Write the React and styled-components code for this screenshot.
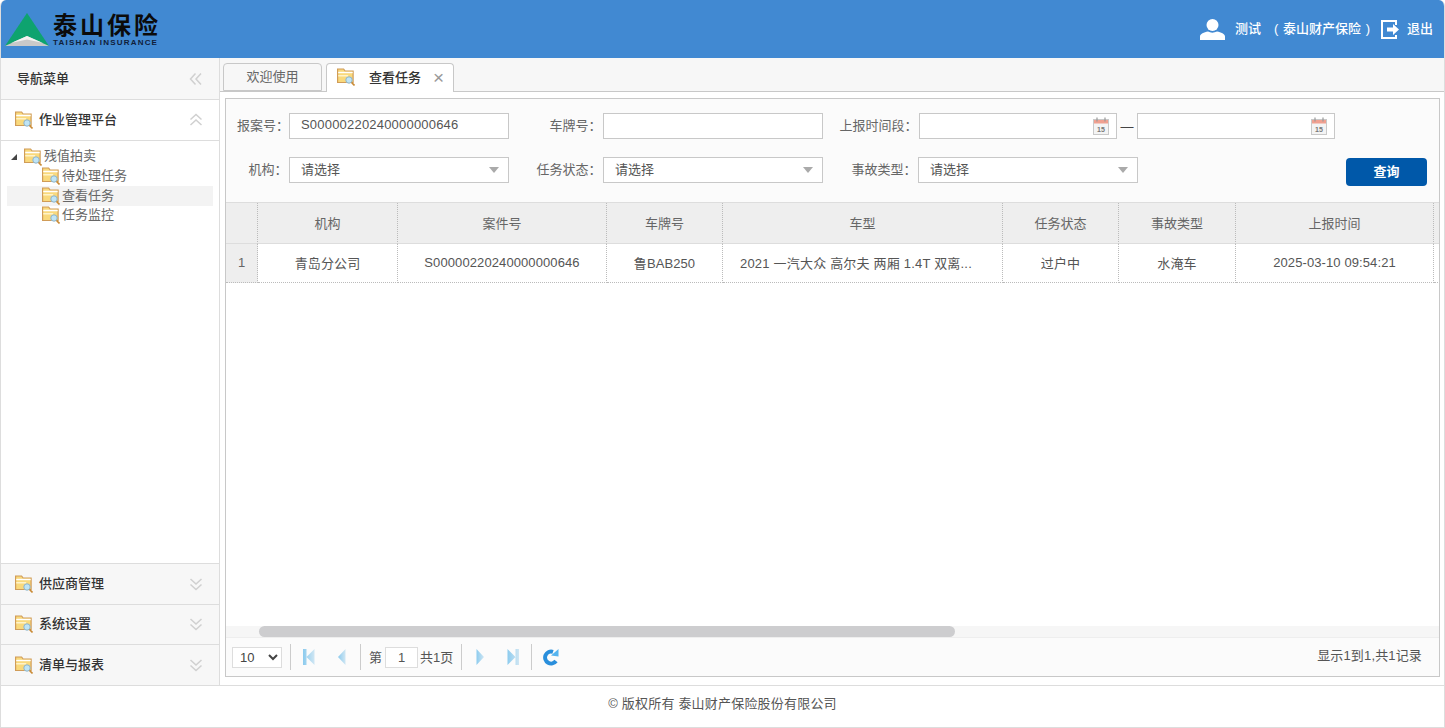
import styled, { createGlobalStyle } from "styled-components";

const GlobalStyle = createGlobalStyle`
  html, body {
    margin: 0;
    padding: 0;
    background: #fff;
  }
  body {
    font-family: "Liberation Sans", "Noto Sans CJK SC", sans-serif;
    font-size: 13px;
    color: #555;
  }
  * {
    box-sizing: border-box;
  }
`;

const columns = [
  { title: "", width: 32 },
  { title: "机构", width: 140 },
  { title: "案件号", width: 209 },
  { title: "车牌号", width: 116 },
  { title: "车型", width: 280 },
  { title: "任务状态", width: 116 },
  { title: "事故类型", width: 117 },
  { title: "上报时间", width: 198 },
  { title: "", width: 6 },
];

const rows = [
  [
    "青岛分公司",
    "S00000220240000000646",
    "鲁BAB250",
    "2021 一汽大众 高尔夫 两厢 1.4T 双离...",
    "过户中",
    "水淹车",
    "2025-03-10 09:54:21",
    "",
  ],
];

const FolderIcon = () => (
  <FolderSvg viewBox="0 0 18 18" width="18" height="18">
    <path d="M0.600 1h6l1.500 2h8v11.500h-15.500z" fill="#f9d97c" stroke="#d09c58" strokeWidth="1.200" />
    <path d="M1.200 4.500h14.500" stroke="#fff" strokeWidth="1.400" />
    <path d="M1.200 7h10v1.500h-10z" fill="#fff3c8" />
    <circle cx="12" cy="12" r="3.200" fill="#bfe4f5" stroke="#8fb4c8" />
    <path d="M14.500 14.500l3 3" stroke="#c98a35" strokeWidth="1.600" />
  </FolderSvg>
);

const DoubleChevron = ({ dir }) => (
  <ChevronSvg viewBox="0 0 14 14" width="14" height="14" $dir={dir}>
    <path d="M1.500 6.500L7 1.500l5.500 5M1.500 12L7 7l5.500 5" fill="none" stroke="#d0d0d0" strokeWidth="1.500" />
  </ChevronSvg>
);

const CalendarIcon = () => (
  <CalendarSvg viewBox="0 0 16 18" width="16" height="18">
    <rect x="0.500" y="2.500" width="15" height="15" fill="#f4f4f4" stroke="#c9c9c9" />
    <rect x="1" y="3" width="14" height="3.500" fill="#f0a090" />
    <path d="M4 0.500v4M12 0.500v4" stroke="#999" strokeWidth="1.200" />
    <CalendarDay x="8" y="14.500" textAnchor="middle">
      15
    </CalendarDay>
  </CalendarSvg>
);

const UserIcon = () => (
  <svg viewBox="0 0 25 21" width="25" height="21">
    <ellipse cx="12.500" cy="6" rx="6" ry="6" fill="#fff" />
    <path d="M0 21v-3.500c0-2.500 4-4.500 8-5 2.500 1.500 6 1.500 9 0 4 .5 8 2.500 8 5V21z" fill="#fff" />
  </svg>
);

const ExitIcon = () => (
  <svg viewBox="0 0 19 19" width="19" height="19">
    <path d="M15 5V1H1v17h14v-3" fill="none" stroke="#fff" strokeWidth="2" />
    <path d="M6 7.500h6V4l6 5.500-6 5.500v-3.500H6z" fill="#fff" />
  </svg>
);

const PagerIcon = ({ type }) => (
  <svg viewBox="0 0 12 18" width="12" height="18">
    <defs>
      <linearGradient id="pagerBlue" x1="0" x2="1" y1="0" y2="0">
        <stop offset="0" stopColor="#8ccbee" />
        <stop offset="1" stopColor="#cfe6f3" />
      </linearGradient>
    </defs>
    {type === "first" && <path d="M0 1h3.500v16H0zM11.500 1v16L3.500 9z" fill="url(#pagerBlue)" />}
    {type === "prev" && <path d="M9.500 1v16L2 9z" fill="url(#pagerBlue)" />}
    {type === "next" && <path d="M2.500 1v16L10 9z" fill="url(#pagerBlue)" />}
    {type === "last" && <path d="M12 1H8.500v16H12zM.5 1v16L8.500 9z" fill="url(#pagerBlue)" />}
  </svg>
);

const RefreshIcon = () => (
  <svg viewBox="0 0 16 18" width="16" height="18">
    <path d="M13 13A6 6 0 1 1 10 3.800" fill="none" stroke="#2a8fdc" strokeWidth="4" />
    <path d="M8 7.500L15.500 8.500V1z" fill="#55b4ef" />
  </svg>
);

const Field = ({ label, width, children }) => (
  <>
    <FieldLabel $width={width}>{label}</FieldLabel>
    {children}
  </>
);

const Select = () => (
  <SelectBox>
    <InputText>请选择</InputText>
    <Caret />
  </SelectBox>
);

const App = () => {
  return (
    <Page>
      <GlobalStyle />
      <Header>
        <Logo>
          <svg viewBox="0 0 46 36" width="46" height="36">
            <path d="M23 0L45 33H1z" fill="#0ea36f" />
            <path d="M1 33l22-10 22 10z" fill="#c9c9c9" />
            <path d="M7 30l16-7 16 7-16-3.500z" fill="#f2f2f2" />
          </svg>
          <LogoText>
            <LogoName>泰山保险</LogoName>
            <LogoEn>TAISHAN INSURANCE</LogoEn>
          </LogoText>
        </Logo>
        <UserArea>
          <UserIcon />
          <UserName>测试</UserName>
          <UserCompany>( 泰山财产保险 )</UserCompany>
          <ExitIcon />
          <ExitText>退出</ExitText>
        </UserArea>
      </Header>

      <Body>
        <Sidebar>
          <SideTitle>
            <LiftedText>导航菜单</LiftedText>
            <DoubleChevron dir="left" />
          </SideTitle>
          <SectionHead $open>
            <FolderIcon />
            <SectionName>作业管理平台</SectionName>
            <DoubleChevron dir="up" />
          </SectionHead>
          <Tree>
            <TreeRow>
              <TreeArrow />
              <FolderIcon />
              <TreeText $root>残值拍卖</TreeText>
            </TreeRow>
            <TreeRow $child>
              <FolderIcon />
              <TreeText>待处理任务</TreeText>
            </TreeRow>
            <TreeRow $child $active>
              <FolderIcon />
              <TreeText>查看任务</TreeText>
            </TreeRow>
            <TreeRow $child>
              <FolderIcon />
              <TreeText>任务监控</TreeText>
            </TreeRow>
          </Tree>
          {["供应商管理", "系统设置", "清单与报表"].map((name) => (
            <SectionHead key={name}>
              <FolderIcon />
              <SectionName>{name}</SectionName>
              <DoubleChevron dir="down" />
            </SectionHead>
          ))}
        </Sidebar>

        <Main>
          <Tabs>
            <Tab>
              <LiftedText>欢迎使用</LiftedText>
            </Tab>
            <Tab $active>
              <FolderIcon />
              <TabTitle>查看任务</TabTitle>
              <TabClose>×</TabClose>
            </Tab>
          </Tabs>

          <Panel>
            <SearchForm>
              <FormRow>
                <Field label="报案号：" width={52}>
                  <TextInput $width={220}>
                    <InputText>S00000220240000000646</InputText>
                  </TextInput>
                </Field>
                <Field label="车牌号：" width={94}>
                  <TextInput $width={220} />
                </Field>
                <Field label="上报时间段：" width={96}>
                  <DateInput>
                    <CalendarIcon />
                  </DateInput>
                </Field>
                <Dash>—</Dash>
                <DateInput>
                  <CalendarIcon />
                </DateInput>
              </FormRow>
              <FormRow>
                <Field label="机构：" width={52}>
                  <Select />
                </Field>
                <Field label="任务状态：" width={94}>
                  <Select />
                </Field>
                <Field label="事故类型：" width={95}>
                  <Select />
                </Field>
                <QueryButton>查询</QueryButton>
              </FormRow>
            </SearchForm>

            <Grid>
              <GridTable>
                <colgroup>
                  {columns.map((col, i) => (
                    <col key={i} width={col.width} />
                  ))}
                </colgroup>
                <thead>
                  <tr>
                    {columns.map((col, i) => (
                      <HeadCell key={i}>{col.title}</HeadCell>
                    ))}
                  </tr>
                </thead>
                <tbody>
                  {rows.map((row, i) => (
                    <tr key={i}>
                      <IndexCell>{i + 1}</IndexCell>
                      {row.map((cell, j) => (
                        <BodyCell key={j} $left={j === 3}>
                          {cell}
                        </BodyCell>
                      ))}
                    </tr>
                  ))}
                </tbody>
              </GridTable>
            </Grid>

            <ScrollTrack>
              <ScrollThumb />
            </ScrollTrack>

            <Pager>
              <PageSize defaultValue="10">
                <option>10</option>
                <option>20</option>
                <option>50</option>
              </PageSize>
              <PagerSep />
              <PagerGroup $pad={1.5}>
                <PagerButton>
                  <PagerIcon type="first" />
                </PagerButton>
                <PagerButton>
                  <PagerIcon type="prev" />
                </PagerButton>
              </PagerGroup>
              <PagerSep />
              <PagerGroup $pad={8}>
                <PageText>第</PageText>
                <PageInput>1</PageInput>
                <PageText>共1页</PageText>
              </PagerGroup>
              <PagerSep />
              <PagerGroup $pad={1.5}>
                <PagerButton>
                  <PagerIcon type="next" />
                </PagerButton>
                <PagerButton>
                  <PagerIcon type="last" />
                </PagerButton>
              </PagerGroup>
              <PagerSep />
              <PagerGroup $pad={2}>
                <PagerButton>
                  <RefreshIcon />
                </PagerButton>
              </PagerGroup>
              <PagerInfo>显示1到1,共1记录</PagerInfo>
            </Pager>
          </Panel>
        </Main>
      </Body>

      <Footer>© 版权所有 泰山财产保险股份有限公司</Footer>
    </Page>
  );
};

export default App;

const Page = styled.div`
  display: flex;
  flex-direction: column;
  height: 728px;
  border-left: 1px solid #ddd;
  border-right: 1px solid #ddd;
  border-radius: 6px 6px 0 0;
  overflow: hidden;
  background: #fff;
`;

const Header = styled.header`
  display: flex;
  align-items: center;
  justify-content: space-between;
  flex: 0 0 58px;
  margin: 0 -1px;
  padding: 0 12px 0 4px;
  background: #4189d2;
`;

const Logo = styled.div`
  display: flex;
  align-items: flex-end;
  gap: 3px;
  height: 36px;
  margin-top: 3px;
`;

const LogoText = styled.div`
  display: flex;
  flex-direction: column;
  width: 106px;
  padding-bottom: 2px;
`;

const LogoName = styled.span`
  font-size: 24px;
  line-height: 25px;
  font-weight: 700;
  letter-spacing: 3px;
  white-space: nowrap;
  color: #0b0b0b;
`;

const LogoEn = styled.span`
  font-size: 8px;
  line-height: 9px;
  font-weight: 700;
  letter-spacing: 1.2px;
  white-space: nowrap;
  color: #10203a;
`;

const UserArea = styled.div`
  display: flex;
  align-items: center;
  color: #fff;
`;

const UserName = styled.span`
  margin-left: 10px;
  padding-bottom: 4px;
  font-weight: 500;
  white-space: nowrap;
`;

const UserCompany = styled.span`
  margin: 0 11px 0 13px;
  padding-bottom: 4px;
  font-weight: 500;
  white-space: nowrap;
  word-spacing: 1px;
`;

const ExitText = styled.span`
  margin-left: 7px;
  padding-bottom: 4px;
  font-weight: 500;
`;

const LiftedText = styled.span`
  padding-bottom: 3px;
`;

const Body = styled.div`
  display: flex;
  flex: 1;
  min-height: 0;
`;

const Sidebar = styled.aside`
  display: flex;
  flex-direction: column;
  flex: 0 0 219px;
  border-right: 1px solid #ddd;
`;

const SideTitle = styled.div`
  display: flex;
  align-items: center;
  justify-content: space-between;
  flex: 0 0 42px;
  padding: 0 16px 0 16px;
  background: #f7f7f7;
  border-bottom: 1px solid #ddd;
  color: #333;
  font-weight: 500;
`;

const SectionHead = styled.div`
  display: flex;
  align-items: center;
  flex: 0 0 ${(p) => (p.$open ? "41px" : "40.700px")};
  padding: 0 16px 0 14px;
  background: ${(p) => (p.$open ? "#fff" : "#f7f7f7")};
  border-top: ${(p) => (p.$open ? "0" : "1px solid #ddd")};
  border-bottom: ${(p) => (p.$open ? "1px solid #ddd" : "0")};
`;

const SectionName = styled.span`
  flex: 1;
  margin-left: 6px;
  padding-bottom: 3px;
  color: #333;
  font-weight: 500;
`;

const FolderSvg = styled.svg`
  flex: none;
`;

const ChevronSvg = styled.svg`
  flex: none;
  transform: rotate(
    ${(p) => (p.$dir === "left" ? "-90deg" : p.$dir === "down" ? "180deg" : "0")}
  );
`;

const Tree = styled.div`
  flex: 1;
  padding: 6px 6px 0;
`;

const TreeRow = styled.div`
  display: flex;
  align-items: center;
  height: 19.500px;
  padding-left: ${(p) => (p.$child ? "35px" : "4px")};
  background: ${(p) => (p.$active ? "#f3f3f3" : "transparent")};
`;

const TreeArrow = styled.span`
  width: 0;
  height: 0;
  margin-right: 7px;
  border-style: solid;
  border-width: 0 0 6px 6px;
  border-color: transparent transparent #444 transparent;
`;

const TreeText = styled.span`
  margin-left: 2px;
  padding-bottom: ${(p) => (p.$root ? "5px" : "3px")};
  color: #666;
`;

const Main = styled.main`
  display: flex;
  flex-direction: column;
  flex: 1;
  min-width: 0;
`;

const Tabs = styled.div`
  display: flex;
  align-items: flex-end;
  gap: 4px;
  flex: 0 0 34px;
  padding-left: 3px;
  background: #f7f7f7;
  border-bottom: 1px solid #c8c8c8;
`;

const Tab = styled.div`
  display: flex;
  align-items: center;
  justify-content: ${(p) => (p.$active ? "flex-start" : "center")};
  width: ${(p) => (p.$active ? "128px" : "99px")};
  height: ${(p) => (p.$active ? "29px" : "28px")};
  margin-bottom: ${(p) => (p.$active ? "-1px" : "0")};
  padding: ${(p) => (p.$active ? "0 0 2px 10px" : "0")};
  background: ${(p) => (p.$active ? "#fff" : "#f7f7f7")};
  border: 1px solid #c8c8c8;
  border-bottom: ${(p) => (p.$active ? "0" : "1px solid #c8c8c8")};
  border-radius: 4px 4px 0 0;
  color: #666;
`;

const TabTitle = styled.span`
  margin-left: 14px;
  padding-bottom: 2px;
  color: #333;
  font-weight: 500;
`;

const TabClose = styled.span`
  margin-left: 12px;
  font-size: 19px;
  line-height: 17px;
  color: #999;
`;

const Panel = styled.section`
  display: flex;
  flex-direction: column;
  flex: none;
  width: 1215px;
  height: 579px;
  margin: 6px 0 0 5px;
  background: #fff;
  border: 1px solid #c8c8c8;
`;

const SearchForm = styled.div`
  display: flex;
  flex-direction: column;
  gap: 18px;
  flex: 0 0 104px;
  padding: 14px 0 0 11px;
  background: #fbfbfb;
  border-bottom: 1px solid #ddd;
`;

const FormRow = styled.div`
  display: flex;
  align-items: center;
  height: 26px;
`;

const FieldLabel = styled.label`
  flex: none;
  width: ${(p) => p.$width}px;
  padding: 0 1.500px 4px 0;
  color: #666;
  text-align: right;
  white-space: nowrap;
`;

const TextInput = styled.div`
  display: flex;
  align-items: center;
  flex: none;
  width: ${(p) => p.$width}px;
  height: 26px;
  padding: 0 7px 0 11px;
  background: #fff;
  border: 1px solid #c8c8c8;
  color: #555;
  letter-spacing: 0.2px;
`;

const DateInput = styled(TextInput).attrs({ $width: 198 })`
  justify-content: flex-end;
`;

const InputText = styled.span`
  padding-bottom: 3px;
`;

const CalendarSvg = styled.svg`
  flex: none;
`;

const CalendarDay = styled.text`
  font: 700 7px "Liberation Sans", sans-serif;
  letter-spacing: 0;
  fill: #777;
`;

const Dash = styled.span`
  flex: none;
  width: 20px;
  text-align: center;
  color: #444;
`;

const SelectBox = styled.div`
  display: flex;
  align-items: center;
  justify-content: space-between;
  flex: none;
  width: 220px;
  height: 26px;
  padding: 0 9px 0 11px;
  background: #fff;
  border: 1px solid #c8c8c8;
  color: #555;
`;

const Caret = styled.span`
  width: 0;
  height: 0;
  border-style: solid;
  border-width: 6px 5.500px 0;
  border-color: #aaa transparent transparent;
`;

const QueryButton = styled.button`
  width: 81px;
  height: 28px;
  margin: 4px 12px 0 auto;
  padding: 0 0 4px;
  background: #0058a9;
  border: 0;
  border-radius: 4px;
  color: #fff;
  font: 700 13px "Liberation Sans", "Noto Sans CJK SC", sans-serif;
`;

const Grid = styled.div`
  flex: 1;
  min-height: 0;
  overflow: hidden;
`;

const GridTable = styled.table`
  table-layout: fixed;
  width: 1214px;
  border-collapse: separate;
  border-spacing: 0;
`;

const HeadCell = styled.th`
  height: 41px;
  padding: 0 0 2px;
  background: #eee;
  border-right: 1px dotted #bbb;
  border-bottom: 1px solid #ddd;
  color: #666;
  font-weight: 400;
`;

const IndexCell = styled.td`
  height: 39px;
  padding: 0 0 2px;
  background: #eee;
  border-right: 1px dotted #bbb;
  border-bottom: 1px dotted #bbb;
  text-align: center;
  color: #666;
`;

const BodyCell = styled.td`
  height: 39px;
  padding: ${(p) => (p.$left ? "0 0 2px 17px" : "0 0 2px")};
  border-right: 1px dotted #bbb;
  border-bottom: 1px dotted #bbb;
  color: #555;
  text-align: ${(p) => (p.$left ? "left" : "center")};
  white-space: nowrap;
  letter-spacing: ${(p) => (p.$left ? "0.200px" : "0.100px")};
  &:last-child {
    padding: 0;
    border-right: 0;
  }
`;

const ScrollTrack = styled.div`
  flex: 0 0 11px;
  padding-left: 33px;
  background: #f6f6f6;
`;

const ScrollThumb = styled.div`
  width: 696px;
  height: 11px;
  background: #cdcdcf;
  border-radius: 6px;
`;

const Pager = styled.div`
  display: flex;
  align-items: center;
  flex: 0 0 39px;
  padding: 0 17px 0 6px;
  background: #fbfbfb;
  border-top: 1px solid #eee;
`;

const PageSize = styled.select`
  width: 50px;
  height: 21px;
  margin-right: 8px;
  padding: 0 0 0 3px;
  background: #fff;
  border: 1px solid #ddd;
  color: #444;
  font: 13px "Liberation Sans", sans-serif;
`;

const PagerSep = styled.span`
  flex: none;
  width: 1px;
  height: 26px;
  background: #ccc;
`;

const PagerGroup = styled.div`
  display: flex;
  align-items: center;
  flex: none;
  padding: 0 ${(p) => p.$pad}px;
`;

const PagerButton = styled.span`
  display: flex;
  align-items: center;
  justify-content: center;
  flex: none;
  width: 33px;
`;

const PageText = styled.span`
  flex: none;
  padding-bottom: 2px;
  color: #555;
`;

const PageInput = styled.span`
  flex: none;
  width: 33px;
  height: 21px;
  margin: 0 2px 0 3px;
  background: #fff;
  border: 1px solid #ddd;
  color: #555;
  line-height: 19px;
  text-align: center;
`;

const PagerInfo = styled.span`
  margin: -6px 0 0 auto;
  color: #555;
  letter-spacing: 0.15px;
`;

const Footer = styled.footer`
  flex: 0 0 43px;
  border-top: 1px solid #ddd;
  border-bottom: 1px solid #ddd;
  color: #555;
  font-size: 13px;
  letter-spacing: 0.2px;
  line-height: 36px;
  text-align: center;
`;
